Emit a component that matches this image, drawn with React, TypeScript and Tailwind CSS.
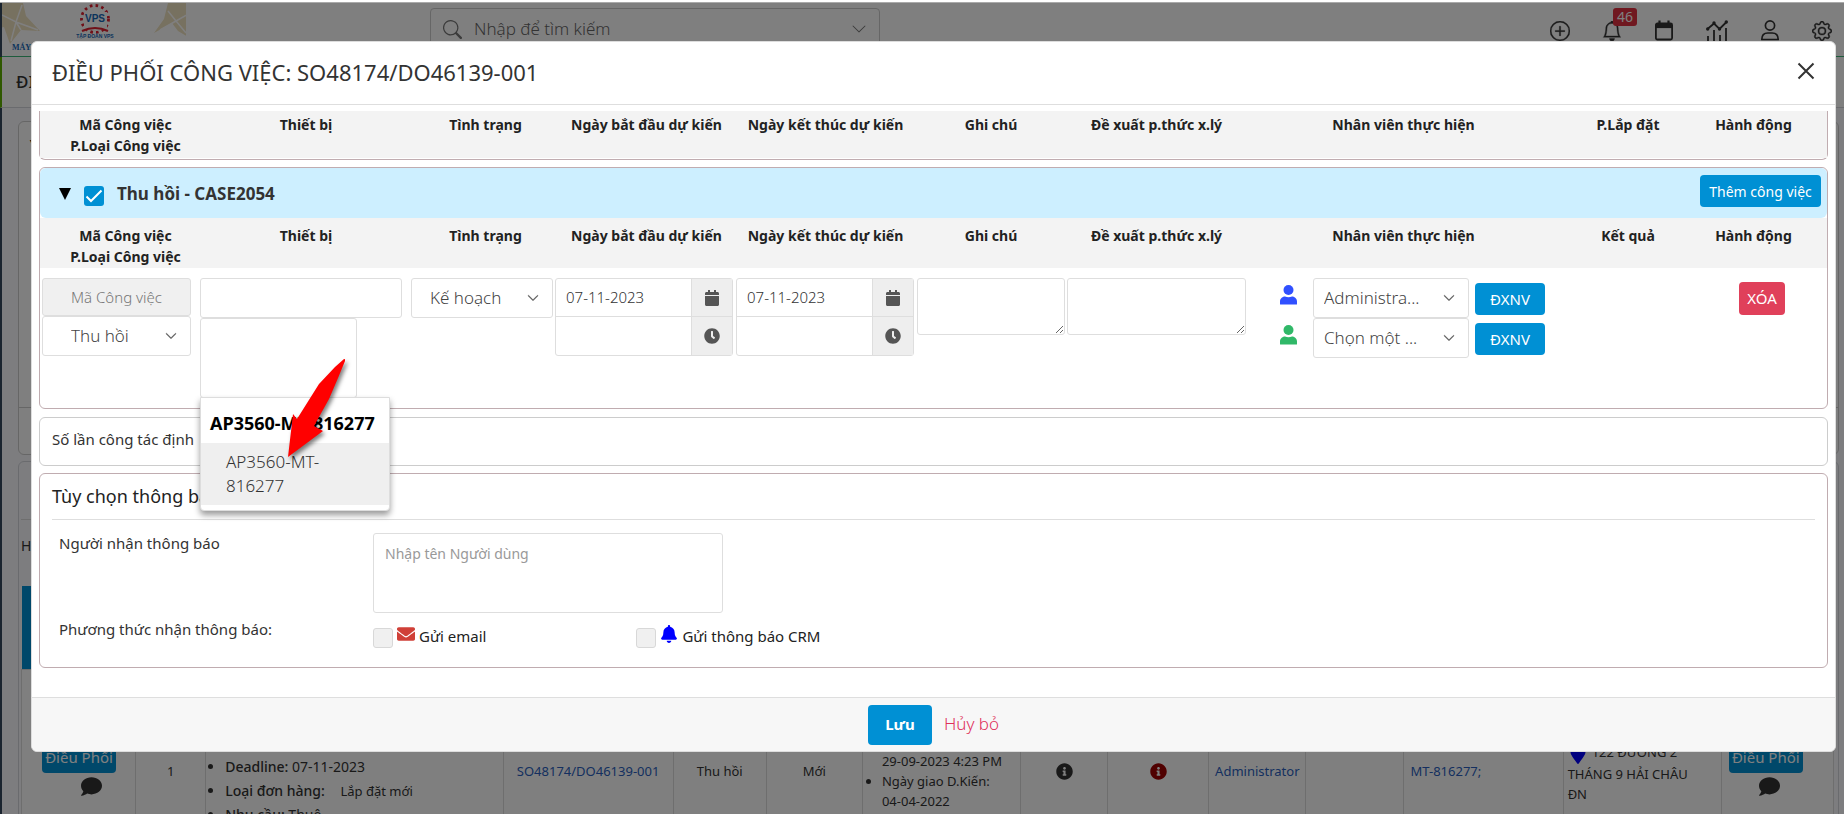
import React from "react";
import { BsBell, BsGear, BsPlusCircle, BsSearch, BsChevronDown } from "react-icons/bs";
import {
  FaBell,
  FaCalendar,
  FaClock,
  FaComment,
  FaEnvelope,
  FaInfoCircle,
  FaMapMarker,
} from "react-icons/fa";

const inputBase = "block rounded-[3px] border border-[#dedede] outline-none";

function CalendarTop() {
  return (
    <svg viewBox="0 0 20 22" className="h-[22px] w-5" fill="none" stroke="currentColor" strokeWidth="1.8">
      <rect x="1.900" y="3.500" width="16.200" height="16" rx="1.500" />
      <path d="M2 5.800h16" strokeWidth="4.600" />
      <path d="M5.500 0.500v4M14.500 0.500v4" strokeWidth="2.200" />
    </svg>
  );
}

function ChartIcon() {
  return (
    <svg viewBox="0 0 22 22" className="h-[22px] w-[22px]" fill="none" stroke="currentColor" strokeWidth="1.8">
      <path d="M1.500 9L8 3.500L13.500 9L20.500 2" />
      <path d="M2 22v-6M8 22V10M14 22v-7M20 22V8" />
      <g fill="currentColor" stroke="none">
        <circle cx="1.700" cy="9" r="1.700" />
        <circle cx="8" cy="3" r="1.700" />
        <circle cx="13.500" cy="9" r="1.700" />
        <circle cx="20.300" cy="2" r="1.700" />
      </g>
    </svg>
  );
}

function PersonOutline() {
  return (
    <svg viewBox="0 0 20 22" className="h-[22px] w-5" fill="none" stroke="currentColor" strokeWidth="1.700">
      <circle cx="10" cy="5.500" r="4.600" />
      <path d="M1.800 19.500c0-4.500 2.700-6.500 6-6.500h4.400c3.300 0 6 2 6 6.500z" strokeLinejoin="round" />
    </svg>
  );
}

function PersonSolid({ className }: { className: string }) {
  return (
    <svg viewBox="0 0 17 20" className={className} fill="currentColor">
      <circle cx="8.500" cy="5" r="5" />
      <path d="M0 19v-2.500C0 13 3 11.500 5 11.500q3.500 1.500 7 0c2 0 5 1.500 5 5V19q0 .5-.5.500H.5Q0 19.500 0 19z" />
    </svg>
  );
}

function Logo() {
  return (
    <svg viewBox="0 0 184 50" className="h-[50px] w-[184px]" fontFamily='"Liberation Sans", sans-serif'>
      <path fill="#efe2c0" d="M0 0h21l3 13 14 15-19-1-11 14-6-17-4 1z" />
      <path fill="#efe2c0" d="M166 0h20v34l-10-6-6-8-18 10 10-14z" />
      <path stroke="#fff" strokeWidth="1.500" fill="none" d="M0 12l14 7L20 2M14 19l5 8M14 19l22 8M14 19L9 38M188 10l-14 8-8-10M174 18l10 12M174 18l-16 9" />
      <circle cx="93" cy="16" r="13.500" fill="none" stroke="#e02030" strokeWidth="2.800" strokeDasharray="2.600 3.200" />
      <rect x="82" y="9" width="23" height="18" fill="#fff" />
      <text x="93" y="19" textAnchor="middle" fontSize="10" fontWeight="900" fill="#1668b8">VPS</text>
      <path d="M80 28q13-6 26 0" stroke="#e02030" strokeWidth="2.200" fill="none" />
      <text x="93" y="35" textAnchor="middle" fontSize="5" fontWeight="900" fill="#1668b8">TẬP ĐOÀN VPS</text>
      <text x="10" y="47" fontSize="8" fontWeight="700" fill="#1668b8" fontFamily='"Liberation Serif", serif'>MÁY</text>
    </svg>
  );
}

function IconBar() {
  return (
    <div className="flex items-start gap-8 pr-3 pt-4 text-[20px] text-[#333]">
      <button aria-label="Thêm" className="h-6"><BsPlusCircle className="stroke-current [stroke-width:0.300]" /></button>
      <button aria-label="Thông báo" className="relative h-6">
        <BsBell className="stroke-current [stroke-width:0.300]" />
        <span className="absolute -top-[11px] left-[11px] rounded-[3px] bg-[#e03040] px-1 text-[14px] leading-[18px] text-white">46</span>
      </button>
      <button aria-label="Lịch" className="h-6"><CalendarTop /></button>
      <button aria-label="Báo cáo" className="h-6"><ChartIcon /></button>
      <button aria-label="Tài khoản" className="h-6"><PersonOutline /></button>
      <button aria-label="Cài đặt" className="h-6"><BsGear className="stroke-current [stroke-width:0.300]" /></button>
    </div>
  );
}

function Dispatch({ icon }: { icon: string }) {
  return (
    <div className="flex w-[74px] flex-col items-center">
      <button className="w-[74px] whitespace-nowrap rounded-[4px] bg-[#0090d4] text-[15px] leading-8 text-white">Điều Phối</button>
      <FaComment className={`mt-[3px] text-[21px] text-[#333] ${icon}`} />
    </div>
  );
}

const bgCols = [114, 70, 297, 170, 93, 96, 158, 87, 101, 97, 98, 159, 158, 112];

function Background() {
  const td = "border border-[#ddd] px-1 text-center align-middle";
  return (
    <div className="min-h-full border-l-2 border-[#34495e] bg-[#fafbff]">
      <header className="flex h-[54px] items-start justify-between border-b border-[#3cb878] bg-white">
        <div className="flex flex-1">
          <Logo />
          <div className="ml-[244px] mt-[5px] flex h-[42px] w-[450px] items-center rounded-[4px] border border-[#ccc] px-3 text-[#777]">
            <BsSearch className="text-[19px]" />
            <input aria-label="Tìm kiếm" placeholder="Nhập để tìm kiếm" className="ml-3 flex-1 bg-transparent text-[17px] font-light outline-none placeholder:text-[#666]" />
            <BsChevronDown className="text-[16px]" />
          </div>
        </div>
        <IconBar />
      </header>
      <div className="-ml-[2px] flex h-[51px] items-center border-b border-l-2 border-b-[#d4d6dc] border-l-[#5fb000] bg-white pl-[14px] text-[17px] font-medium text-[#333]">
        ĐIỀU PHỐI
      </div>
      <div className="pl-4 pr-[5px] pt-[13px]">
        <div className="h-[334px] rounded-[6px] border border-[#ccc] bg-[#fff] pl-2 pt-[10px] text-[14px] text-[#222]">
          ▼
          <div className="-ml-2 mt-[254px] border-t border-[#ccc]" />
        </div>
        <div className="mt-[6px] rounded-[6px] border border-[#d4d6dc] pl-[2px] pr-1">
          <div className="h-[58px] border-b border-[#ddd]" />
          <p className="h-[66px] pt-4 text-[14px] leading-5 text-[#333]">Hiển thị</p>
          <table className="w-full table-fixed border-collapse bg-white text-[13px] leading-5 text-[#333]">
            <colgroup>
              {bgCols.map((w, i) => (
                <col key={i} style={{ width: w }} />
              ))}
            </colgroup>
            <thead>
              <tr className="h-[83px] bg-[#0090d4]">
                {bgCols.map((_, i) => (
                  <th key={i} />
                ))}
              </tr>
            </thead>
            <tbody>
              <tr className="h-[204px]">
                <td className="border border-[#ddd] pb-1 pl-5 align-middle"><Dispatch icon="ml-6" /></td>
                <td className={td}>1</td>
                <td className="border border-[#ddd] pb-2 align-middle">
                  <ul className="list-disc pl-[19px] text-[14px] leading-6">
                    <li>Mã KH:</li>
                    <li>Tình trạng:</li>
                    <li><span className="font-medium">Deadline:</span> 07-11-2023</li>
                    <li><span className="font-medium">Loại đơn hàng:</span> <span className="pl-3 text-[13px]">Lắp đặt mới</span></li>
                    <li><span className="font-medium">Nhu cầu:</span> Thuê</li>
                  </ul>
                </td>
                <td className={td}><a href="#don-hang" className="text-[#2a5fc0]">SO48174/DO46139-001</a></td>
                <td className={td}>Thu hồi</td>
                <td className={td}>Mới</td>
                <td className="border border-[#ddd] align-middle">
                  <ul className="list-disc pl-[19px]">
                    <li>Ngày tạo:<br />28-09-2023</li>
                    <li className="list-none">29-09-2023 4:23 PM</li>
                    <li>Ngày giao D.Kiến:<br />04-04-2022</li>
                    <li>Ngày hẹn</li>
                  </ul>
                </td>
                <td className={td}><FaInfoCircle className="mx-auto text-[17px]" /></td>
                <td className={td}><FaInfoCircle className="mx-auto text-[17px] text-[#a00000]" /></td>
                <td className={td}><a href="#admin" className="text-[#2a5fc0]">Administrator</a></td>
                <td className={td} />
                <td className="border border-[#ddd] pl-[6px] align-middle"><a href="#may" className="text-[#2a5fc0]">MT-816277;</a></td>
                <td className="border border-[#ddd] pl-1 pr-5 pt-1 align-middle">
                  <FaMapMarker className="mr-1 inline text-[20px] text-[#0000ff]" />122 ĐƯỜNG 2 THÁNG 9 HẢI CHÂU ĐN
                </td>
                <td className="border border-[#ddd] pb-1 pl-[7px] align-middle"><Dispatch icon="ml-2" /></td>
              </tr>
            </tbody>
          </table>
        </div>
      </div>
    </div>
  );
}

const cols = [159, 210, 145, 181, 181, 150, 181, 313, 136, 131];
const thPads = ["pl-3", "pl-1", "pl-2", "pl-1", "", "", "", "", "", "pr-4"];

function Cols() {
  return (
    <colgroup>
      {cols.map((w, i) => (
        <col key={i} style={{ width: w }} />
      ))}
    </colgroup>
  );
}

function HeadRow({ result, pad }: { result: string; pad: string }) {
  const labels = ["", "Thiết bị", "Tình trạng", "Ngày bắt đầu dự kiến", "Ngày kết thúc dự kiến", "Ghi chú", "Đề xuất p.thức x.lý", "Nhân viên thực hiện", result, "Hành động"];
  return (
    <thead>
      <tr className="bg-[#f3f3f3] text-[14px] leading-[21px] text-[#222]">
        {labels.map((l, i) => (
          <th key={i} className={`whitespace-nowrap align-top font-bold ${pad} ${thPads[i]}`}>
            {i === 0 ? (<>Mã Công việc<br />P.Loại Công việc</>) : l}
          </th>
        ))}
      </tr>
    </thead>
  );
}

function Select({ label, value, className }: { label: string; value: string; className: string }) {
  return (
    <div className="relative">
      <select aria-label={label} defaultValue={value} className={`${inputBase} h-10 w-full appearance-none bg-white text-[17px] font-light text-[#444] ${className}`}>
        <option>{value}</option>
      </select>
      <BsChevronDown className="pointer-events-none absolute right-[14px] top-[14px] stroke-current text-[12px] text-[#555] [stroke-width:0.700]" />
    </div>
  );
}

function DateTime({ name }: { name: string }) {
  const btn = "flex w-[41px] items-center justify-center border-l border-[#dedede] bg-[#eee] text-[16px] text-[#555]";
  return (
    <div className="rounded-[3px] border border-[#dedede]">
      <div className="flex h-[38px] border-b border-[#dedede]">
        <input aria-label={name} defaultValue="07-11-2023" className="min-w-0 flex-1 pl-[10px] text-[15px] font-light text-[#333] outline-none" />
        <button aria-label={`Chọn ${name}`} className={btn}><FaCalendar /></button>
      </div>
      <div className="flex h-[38px]">
        <input aria-label={`Giờ ${name}`} className="min-w-0 flex-1 outline-none" />
        <button aria-label={`Chọn giờ ${name}`} className={btn}><FaClock /></button>
      </div>
    </div>
  );
}

function Staff({ color, value }: { color: string; value: string }) {
  return (
    <div className="flex items-start">
      <PersonSolid className={`mt-[7px] h-5 w-[17px] ${color}`} />
      <div className="ml-4 w-[156px]">
        <Select label="Nhân viên" value={value} className="pl-[10px]" />
      </div>
      <button className="ml-[6px] mt-[5px] h-8 w-[70px] rounded-[4px] bg-[#0090d4] text-[15px] text-white">ĐXNV</button>
    </div>
  );
}

function DeviceMenu() {
  return (
    <div className="absolute left-0 top-[119px] z-10 w-[190px] rounded-b-[4px] border border-[#ddd] bg-white pb-[5px] text-[17px] leading-6 shadow-[0_4px_6px_rgba(0,0,0,0.4)]">
      <p className="whitespace-nowrap pb-2 pl-[9px] pt-[13px] text-[18px] font-bold text-black">AP3560-MT-816277</p>
      <ul role="listbox" aria-label="AP3560-MT-816277">
        <li role="option" aria-selected="true" className="bg-[#efefef] py-[7px] pl-[25px] pr-10 font-light text-[#333]">AP3560-MT-816277</li>
      </ul>
      <svg viewBox="0 0 66 106" className="absolute -top-[40px] left-[84px] h-[106px] w-[66px] drop-shadow-[2px_3px_2px_rgba(0,0,0,0.5)]">
        <path fill="#ff0000" d="M59 1Q60.500 0.500 60 3L53 20L44 41L29 68L38 73L3 99L8 56L12 61L34 26L50 9Z" />
      </svg>
    </div>
  );
}

export default function App() {
  const panel = "rounded-[6px] border border-[#c0acb0]";
  const box = "mr-1 mt-1 h-5 w-5 appearance-none rounded-[3px] border border-[#d8d8d8] bg-[#f0f0f0]";
  return (
    <div className='relative h-screen overflow-hidden bg-white pt-[3px] font-["Noto_Sans",sans-serif]'>
      <Background />
      <div className="absolute inset-x-0 bottom-0 top-[2px] border-t border-[#aaa] bg-black/50" />
      <div className="absolute inset-x-0 top-0 pl-[31px] pr-2 pt-[41px]">
        <section role="dialog" aria-label="Điều phối công việc" className="rounded-[6px] border border-[#ddd] bg-white">
          <header className="flex h-[63px] items-center justify-between border-b border-[#dedede] pl-5 pr-5">
            <h2 className="pb-[2px] text-[22px] text-[#333]">ĐIỀU PHỐI CÔNG VIỆC: SO48174/DO46139-001</h2>
            <button aria-label="Đóng" className="mb-1 text-[#333]">
              <svg viewBox="0 0 18 18" className="h-[18px] w-[18px]" stroke="currentColor" strokeWidth="2"><path d="M1.500 1.500l15 15M16.500 1.500l-15 15" /></svg>
            </button>
          </header>

          <div className="px-[7px] pt-[6px]">
            <div className={`${panel} rounded-t-none border-t-0 pb-px`}>
              <table className="w-full table-fixed">
                <Cols />
                <HeadRow result="P.Lắp đặt" pad="pt-[3px] pb-[2px]" />
              </table>
            </div>

            <div className={`${panel} mt-[7px] h-[242px]`}>
              <div className="flex h-[50px] items-center rounded-[6px] bg-[#cdefff] pl-[19px] pr-[6px]">
                <svg viewBox="0 0 12 12" className="mt-[2px] h-3 w-3" fill="#000"><path d="M0 0h12L6 12z" /></svg>
                <label className="flex items-center pt-px text-[17px] font-bold text-[#333]">
                  <span className="relative mx-[13px] mt-1 h-5 w-5">
                    <input type="checkbox" defaultChecked className="block h-5 w-5 appearance-none rounded-[3px] bg-[#0090d4]" />
                    <svg viewBox="0 0 20 20" className="pointer-events-none absolute inset-0" fill="none" stroke="#fff" strokeWidth="2"><path d="M2.500 10.500l4.500 4.500L17.500 4.500" /></svg>
                  </span>
                  Thu hồi - CASE2054
                </label>
                <button className="mb-1 ml-auto h-8 w-[121px] rounded-[4px] bg-[#0090d4] text-[14px] text-white">Thêm công việc</button>
              </div>
              <table className="w-full table-fixed">
                <Cols />
                <HeadRow result="Kết quả" pad="pt-[7px] pb-px" />
                <tbody>
                  <tr className="align-top">
                    <td className="px-[2px] pt-[10px]">
                      <div className="w-[149px]">
                        <input aria-label="Mã Công việc" disabled placeholder="Mã Công việc" className={`${inputBase} h-[38px] w-full bg-[#f0f0f0] pl-7 text-[15px] font-light placeholder:text-[#777]`} />
                        <Select label="Loại Công việc" value="Thu hồi" className="pl-7" />
                      </div>
                    </td>
                    <td className="relative pl-px pr-[6px] pt-[10px]">
                      <div className="relative w-[202px]">
                        <input aria-label="Thiết bị" className={`${inputBase} h-10 w-full`} />
                        <textarea aria-label="Danh sách thiết bị" className={`${inputBase} h-20 w-[157px] resize-none`} />
                        <DeviceMenu />
                      </div>
                    </td>
                    <td className="px-px pl-[2px] pt-[10px]">
                      <Select label="Tình trạng" value="Kế hoạch" className="pl-[18px]" />
                    </td>
                    <td className="pl-px pr-[2px] pt-[10px]"><DateTime name="Ngày bắt đầu" /></td>
                    <td className="pl-px pr-[2px] pt-[10px]"><DateTime name="Ngày kết thúc" /></td>
                    <td className="px-px pt-[10px]"><textarea aria-label="Ghi chú" className={`${inputBase} h-[57px] w-full resize`} /></td>
                    <td className="px-px pt-[10px]"><textarea aria-label="Đề xuất phương thức xử lý" className={`${inputBase} h-[57px] w-full resize`} /></td>
                    <td className="pl-[33px] pt-[10px]">
                      <Staff color="text-[#3050ff]" value="Administra..." />
                      <Staff color="text-[#30b868]" value="Chọn một ..." />
                    </td>
                    <td />
                    <td className="pl-[43px] pt-[14px]">
                      <button className="h-[33px] w-[46px] rounded-[4px] bg-[#e0405a] text-[15px] text-white">XÓA</button>
                    </td>
                  </tr>
                </tbody>
              </table>
            </div>

            <div className="mt-2 flex h-[49px] items-center rounded-[6px] border border-[#ccc] pb-1 pl-3 text-[15px] text-[#333]">Số lần công tác định</div>

            <div className={`${panel} mt-[7px] h-[195px] px-3`}>
              <h3 className="h-[46px] border-b border-[#dedede] pt-[10px] text-[18px] leading-6 text-[#222]">Tùy chọn thông báo</h3>
              <div className="grid grid-cols-[314px_1fr] pl-[7px] pt-[13px] text-[15px] leading-5 text-[#333]">
                <label htmlFor="receivers">Người nhận thông báo</label>
                <textarea id="receivers" placeholder="Nhập tên Người dùng" className={`${inputBase} h-[80px] w-[350px] resize-none px-[11px] py-[10px] text-[14px] placeholder:text-[#999]`} />
                <span className="pt-[6px]">Phương thức nhận thông báo:</span>
                <div className="flex gap-[150px] pt-[11px] text-[#222]">
                  <label className="flex items-center">
                    <input type="checkbox" className={box} />
                    <FaEnvelope className="mb-1 mr-1 text-[18px] text-[#d04038]" />
                    Gửi email
                  </label>
                  <label className="flex items-center">
                    <input type="checkbox" className={box} />
                    <FaBell className="mb-1 mr-1 text-[18px] text-[#0000ff]" />
                    Gửi thông báo CRM
                  </label>
                </div>
              </div>
            </div>
          </div>

          <footer className="mt-[29px] flex h-[54px] items-center justify-center gap-3 rounded-b-[6px] border-t border-[#dedede] bg-[#f7f7f7]">
            <button className="h-10 w-16 rounded-[4px] bg-[#0090d4] text-[15px] font-bold text-white">Lưu</button>
            <button className="pb-[2px] text-[17px] font-light text-[#e0305a]">Hủy bỏ</button>
          </footer>
        </section>
      </div>
    </div>
  );
}
